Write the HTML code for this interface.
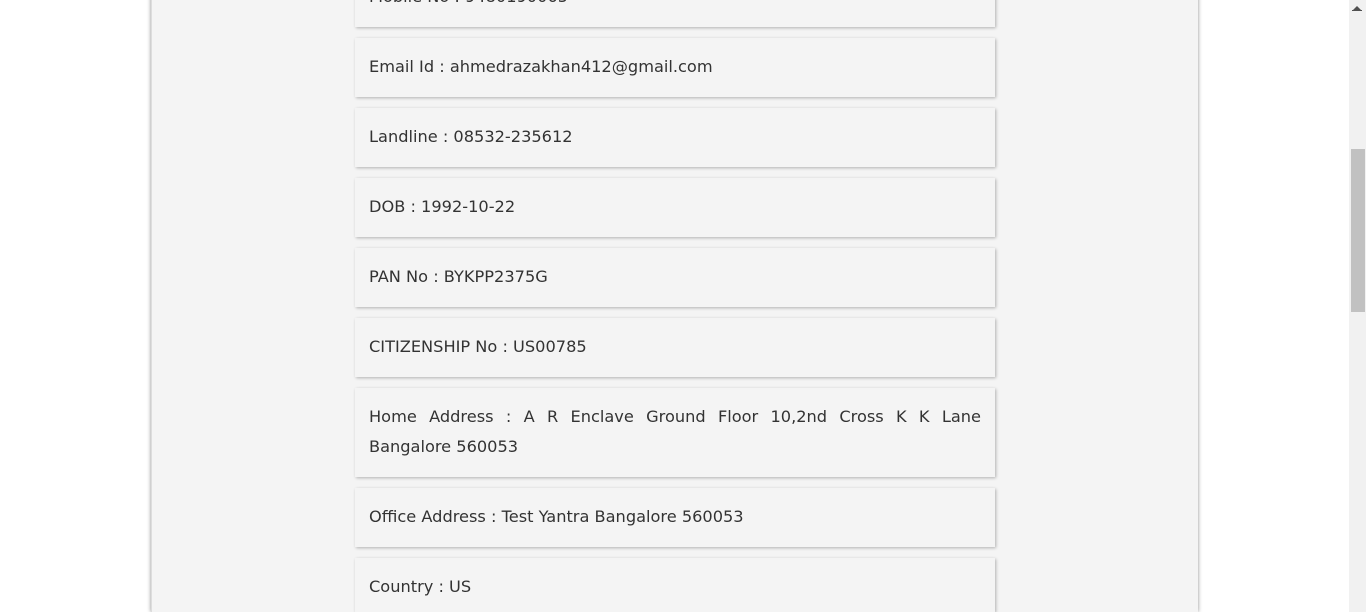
<!DOCTYPE html>
<html><head><meta charset="utf-8"><style>
html,body{margin:0;padding:0;width:1366px;height:612px;overflow:hidden;background:#fff;position:relative;}
.wrap{position:absolute;left:151px;top:-20px;width:1046px;height:632px;background:#f4f4f4;box-shadow:0 0 4px rgba(0,0,0,.45);border-left:1px solid #ddd;}
.card{position:absolute;left:355px;width:612px;padding:0 14px;background:#f4f4f4;box-shadow:1px 1px 3px rgba(0,0,0,.28);font-family:"DejaVu Sans","Liberation Sans",sans-serif;font-size:16.2px;color:#333;line-height:30px;text-align:justify;}
.sb{position:absolute;left:1349px;top:0;width:17px;height:612px;background:#f1f1f1;}
.th{position:absolute;left:1351px;top:149px;width:14px;height:163px;background:#c1c1c1;}
.ar{position:absolute;left:1353px;top:6px;width:0;height:0;border-left:4px solid transparent;border-right:4px solid transparent;border-bottom:4px solid #505050;}
.ar2{position:absolute;left:1352px;top:10px;width:10px;height:1px;background:#505050;}
</style></head><body>
<div class="wrap"></div>
<div class="card" style="top:-33px;height:45px;padding-top:15px;">Mobile No : 9480190065</div>
<div class="card" style="top:38px;height:30px;padding-top:14px;padding-bottom:15px;">Email Id : ahmedrazakhan412@gmail.com</div>
<div class="card" style="top:108px;height:30px;padding-top:14px;padding-bottom:15px;">Landline : 08532-235612</div>
<div class="card" style="top:178px;height:30px;padding-top:14px;padding-bottom:15px;">DOB : 1992-10-22</div>
<div class="card" style="top:248px;height:30px;padding-top:14px;padding-bottom:15px;">PAN No : BYKPP2375G</div>
<div class="card" style="top:318px;height:30px;padding-top:14px;padding-bottom:15px;">CITIZENSHIP No : US00785</div>
<div class="card" style="top:388px;height:60px;padding-top:14px;padding-bottom:15px;">Home Address : A R Enclave Ground Floor 10,2nd Cross K K Lane Bangalore 560053</div>
<div class="card" style="top:488px;height:30px;padding-top:14px;padding-bottom:15px;">Office Address : Test Yantra Bangalore 560053</div>
<div class="card" style="top:558px;height:40px;padding-top:14px;">Country : US</div>
<div class="sb"></div><div class="th"></div><div class="ar"></div><div class="ar2"></div>
</body></html>
